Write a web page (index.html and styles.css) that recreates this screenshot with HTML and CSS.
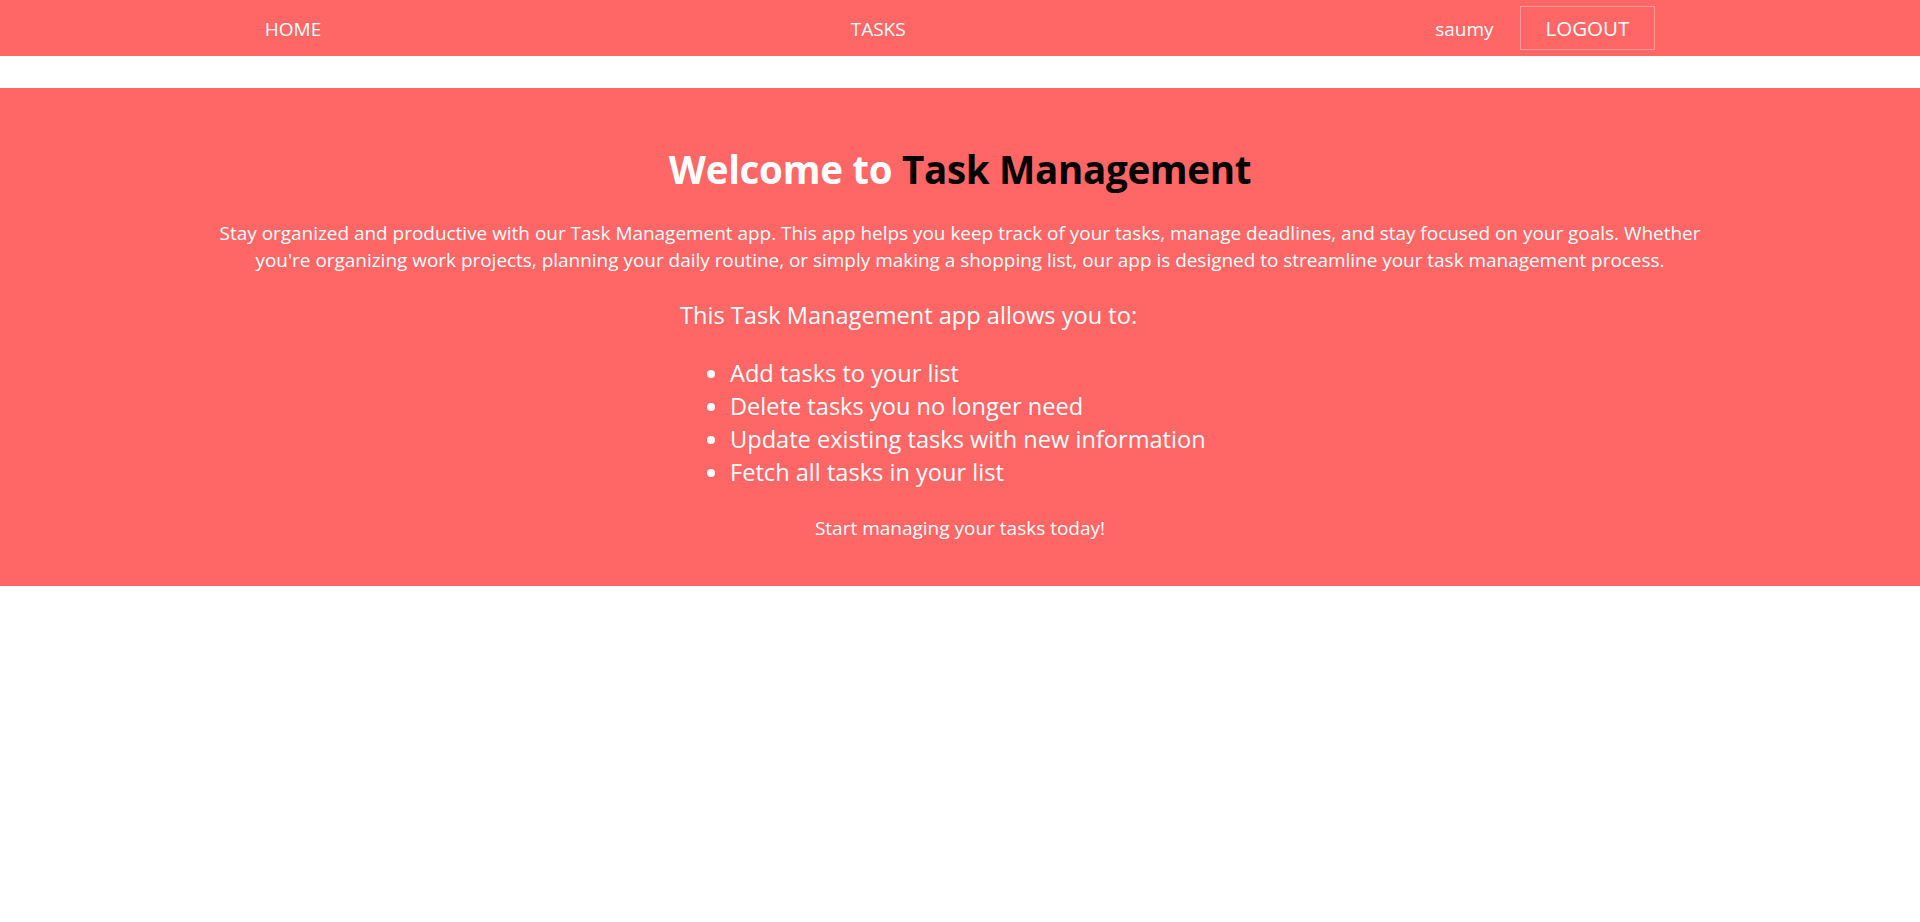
FILE: index.html
```html
<!DOCTYPE html>
<html lang="en">
<head>
<meta charset="utf-8">
<title>Task Management</title>
<link rel="stylesheet" href="styles.css">
</head>
<body>
<nav class="navbar">
  <a class="nav-link" href="#">HOME</a>
  <a class="nav-link" href="#">TASKS</a>
  <div class="nav-user">
    <span class="username">saumy</span>
    <button class="logout-btn" type="button">LOGOUT</button>
  </div>
</nav>
<main class="hero">
  <h1 class="hero-title">Welcome to <span class="accent">Task Management</span></h1>
  <p class="hero-text">Stay organized and productive with our Task Management app. This app helps you keep track of your tasks, manage deadlines, and stay focused on your goals. Whether you're organizing work projects, planning your daily routine, or simply making a shopping list, our app is designed to streamline your task management process.</p>
  <div class="features">
    <p class="features-intro">This Task Management app allows you to:</p>
    <ul class="features-list">
      <li>Add tasks to your list</li>
      <li>Delete tasks you no longer need</li>
      <li>Update existing tasks with new information</li>
      <li>Fetch all tasks in your list</li>
    </ul>
  </div>
  <p class="hero-cta">Start managing your tasks today!</p>
</main>
</body>
</html>
```
FILE: styles.css
```css
* { box-sizing: border-box; }

html, body {
  margin: 0;
  padding: 0;
  background: #ffffff;
  font-family: "Open Sans", "Noto Sans", sans-serif;
  color: #ffffff;
}

.navbar {
  height: 56px;
  background: #ff6666;
  display: flex;
  align-items: center;
  justify-content: space-around;
}

.nav-link {
  color: #ffffff;
  text-decoration: none;
  font-size: 19px;
  line-height: 26px;
  padding-top: 2px;
}

.nav-user {
  display: flex;
  align-items: center;
  gap: 26px;
}

.username {
  font-size: 19px;
  line-height: 26px;
  padding-top: 2px;
}

.logout-btn {
  font-family: inherit;
  font-size: 20.5px;
  line-height: 30px;
  color: #ffffff;
  background: transparent;
  border: 1px solid rgba(255, 255, 255, 0.35);
  padding: 6px 25px;
  margin: 0;
  cursor: pointer;
}

.hero {
  margin-top: 32px;
  background: #ff6666;
  padding: 57px 0 44px;
  text-align: center;
}

.hero-title {
  margin: 0 0 27px;
  font-size: 38.5px;
  line-height: 48px;
  font-weight: 700;
  letter-spacing: -0.3px;
  color: #ffffff;
}

.accent { color: #000000; }

.hero-text {
  margin: 0 auto;
  max-width: 1510px;
  font-size: 18.95px;
  line-height: 27px;
}

.features {
  width: 560px;
  margin: 26px auto 0;
  text-align: left;
}

.features-intro {
  margin: 0 0 26px;
  font-size: 23.6px;
  line-height: 31px;
}

.features-list {
  margin: 0;
  padding-left: 50px;
  font-size: 23.6px;
  line-height: 33px;
}

.hero-cta {
  margin: 26px 0 0;
  font-size: 19px;
  line-height: 27px;
}
```
